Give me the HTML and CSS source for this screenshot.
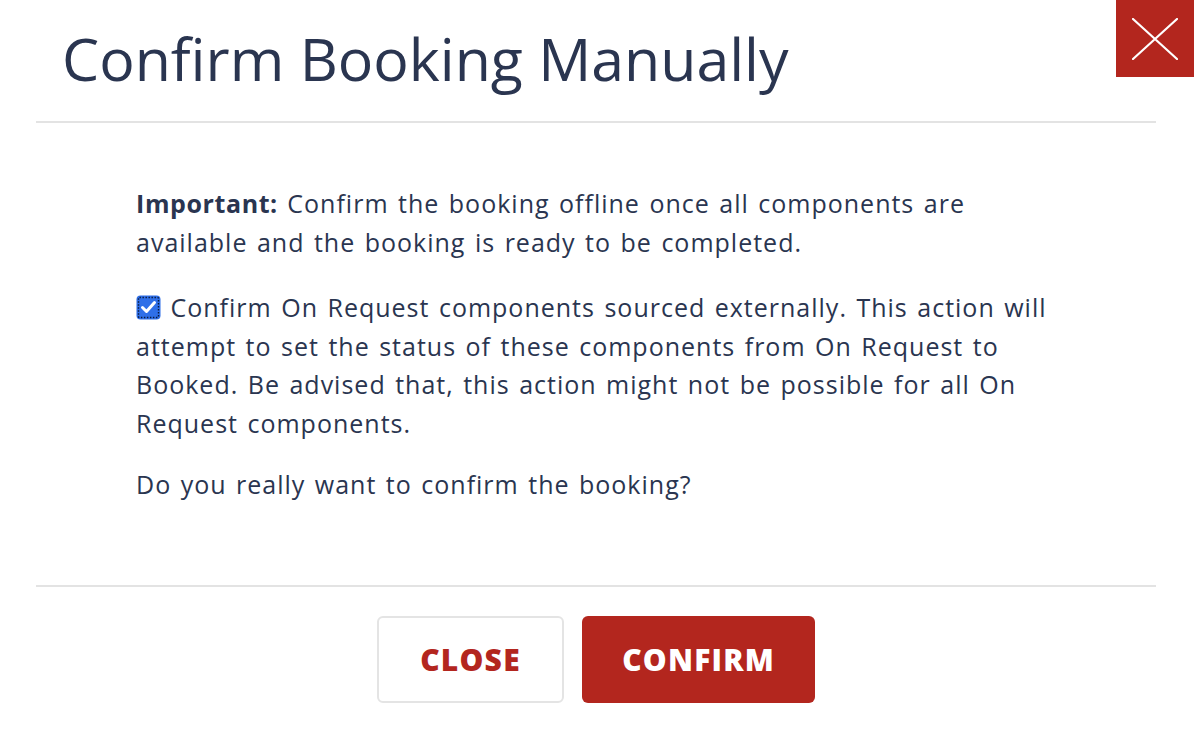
FILE: index.html
```html
<!DOCTYPE html>
<html lang="en">
<head>
<meta charset="utf-8">
<title>Confirm Booking Manually</title>
<link rel="stylesheet" href="styles.css">
</head>
<body>
<div class="dialog">
  <header class="dialog-header">
    <h1 class="dialog-title">Confirm Booking Manually</h1>
    <button class="dialog-close" type="button" aria-label="Close">
      <svg width="46" height="42" viewBox="0 0 46 42"><path d="M1 1 L45 41 M45 1 L1 41" stroke="#fff" stroke-width="2.2" fill="none" stroke-linecap="round"/></svg>
    </button>
  </header>
  <section class="dialog-body">
    <p class="para para-important"><strong>Important:</strong> Confirm the booking offline once all components are available and the booking is ready to be completed.</p>
    <p class="para para-check"><span class="check"><svg width="25" height="25" viewBox="0 0 25 25"><rect x="0.5" y="0.5" width="24" height="24" rx="4" fill="#2f6fe8"/><rect x="2.5" y="2.5" width="20" height="20" rx="1" fill="none" stroke="#0b1a3a" stroke-width="1.4" stroke-dasharray="1.4 1.6"/><path d="M6.5 12.5 L10.5 16.5 L18.5 7.5" stroke="#fff" stroke-width="3" fill="none" stroke-linecap="round" stroke-linejoin="round"/></svg></span> Confirm On Request components sourced externally. This action will attempt to set the status of these components from On Request to Booked. Be advised that, this action might not be possible for all On Request components.</p>
    <p class="para para-question">Do you really want to confirm the booking?</p>
  </section>
  <footer class="dialog-footer">
    <button class="btn btn-secondary" type="button">CLOSE</button>
    <button class="btn btn-primary" type="button">CONFIRM</button>
  </footer>
</div>
</body>
</html>
```
FILE: styles.css
```css
html, body {
  margin: 0;
  padding: 0;
  background: #ffffff;
}
body {
  font-family: "Open Sans", "Noto Sans", sans-serif;
  color: #2a3550;
}
.dialog {
  margin: 0 38px 0 36px;
}
.dialog-header {
  height: 121px;
  border-bottom: 2px solid #e3e3e3;
  display: flex;
  align-items: center;
}
.dialog-title {
  margin: 0 0 0 26px;
  font-size: 59px;
  font-weight: 400;
  line-height: 1;
  color: #2a3550;
  position: relative;
  top: -2px;
}
.dialog-close {
  position: absolute;
  top: 0;
  right: 0;
  width: 78px;
  height: 77px;
  background: #b3261e;
  border: none;
  padding: 0;
  margin: 0;
  display: flex;
  align-items: center;
  justify-content: center;
  cursor: pointer;
}
.dialog-body {
  padding: 61px 100px 82px 100px;
  border-bottom: 2px solid #e3e3e3;
  font-size: 25px;
  line-height: 38.6px;
  letter-spacing: 1px;
  word-spacing: 2px;
}
.para {
  margin: 0;
}
.para-check {
  margin-top: 27px;
}
.para-question {
  margin-top: 22px;
}
.para strong {
  font-weight: 700;
  letter-spacing: 0.6px;
}
.check {
  display: inline-block;
  width: 25px;
  height: 25px;
  vertical-align: -3px;
}
.check svg {
  display: block;
}
.dialog-footer {
  display: flex;
  justify-content: center;
  gap: 18px;
  padding: 29px 0 30px;
}
.btn {
  height: 87px;
  border-radius: 6px;
  font-family: "Open Sans", "Noto Sans", sans-serif;
  font-size: 30px;
  font-weight: 800;
  letter-spacing: 1.2px;
  cursor: pointer;
}
.btn-secondary {
  width: 187px;
  background: #ffffff;
  border: 2px solid #e4e4e4;
  color: #b3261e;
}
.btn-primary {
  width: 233px;
  background: #b3261e;
  border: none;
  color: #ffffff;
}
```
